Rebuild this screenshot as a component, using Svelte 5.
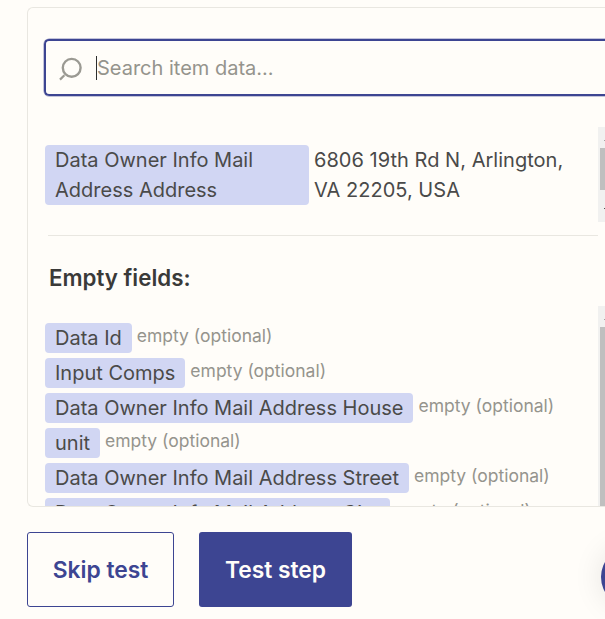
<script>
  const emptyFields = [
    "Data Id",
    "Input Comps",
    "Data Owner Info Mail Address House",
    "unit",
    "Data Owner Info Mail Address Street",
    "Data Owner Info Mail Address City"
  ];
</script>

<div class="page">
  <div class="card">
    <div class="search">
      <svg class="icon" width="26" height="26" viewBox="0 0 26 26" fill="none">
        <circle cx="13.7" cy="12.8" r="8.9" stroke="#9b9a93" stroke-width="2.4" />
        <path d="M6.4 20.2 L2 24.6" stroke="#9b9a93" stroke-width="2.2" />
      </svg>
      <span class="caret"></span>
      <span class="placeholder">Search item data...</span>
    </div>

    <div class="section first">
      <div class="row">
        <span class="pill wide">Data Owner Info Mail Address Address</span>
        <span class="value">6806 19th Rd N, Arlington, VA 22205, USA</span>
      </div>
      <div class="scrollbar short">
        <div class="arrow up"></div>
        <div class="thumb"></div>
        <div class="arrow down"></div>
      </div>
    </div>

    <div class="divider"></div>
    <div class="heading">Empty fields:</div>

    <div class="section list">
      <div class="rows">
        {#each emptyFields as name}
          <div class="row-empty">
            <span class="pill">{name}</span>
            <span class="muted">empty (optional)</span>
          </div>
        {/each}
      </div>
      <div class="scrollbar tall">
        <div class="arrow up"></div>
        <div class="thumb"></div>
      </div>
    </div>
  </div>

  <div class="actions">
    <button class="skip">Skip test</button>
    <button class="test">Test step</button>
  </div>

  <div class="chat"></div>
</div>

<style>
  :global(body) {
    margin: 0;
    background: #fffdf9;
    overflow: hidden;
  }

  .page {
    position: relative;
    width: 605px;
    height: 619px;
    padding: 7px 0 0 27px;
    box-sizing: border-box;
    overflow: hidden;
    font-family: Inter, "Liberation Sans", sans-serif;
    color: #4a4a49;
  }

  .card {
    width: 600px;
    height: 500px;
    box-sizing: border-box;
    border: 1px solid #e9e7e1;
    border-right: none;
    border-radius: 6px 0 0 6px;
    padding-top: 31px;
    overflow: hidden;
  }

  .search {
    display: flex;
    align-items: center;
    height: 57px;
    margin-left: 16px;
    box-sizing: border-box;
    border: 2px solid #3d4592;
    border-right: none;
    border-radius: 5px 0 0 5px;
    box-shadow: 0 0 0 0.5px rgba(61, 69, 146, 0.6);
    padding-left: 12px;
  }

  .icon {
    flex: none;
  }

  .caret {
    width: 1px;
    height: 24px;
    margin-left: 12px;
    background: #2d2e2e;
  }

  .placeholder {
    font-size: 20px;
    color: #95948d;
  }

  .section {
    display: flex;
    justify-content: space-between;
    width: 577px;
  }

  .first {
    height: 95px;
    margin-top: 31px;
  }

  .row {
    display: flex;
    align-items: flex-start;
    margin: 18px 0 0 17px;
  }

  .pill {
    display: inline-block;
    box-sizing: border-box;
    padding: 0 10px;
    background: #d1d6f3;
    border-radius: 4px;
    font-size: 20px;
    line-height: 30px;
    color: #4a4a49;
  }

  .pill.wide {
    width: 264px;
  }

  .value {
    width: 270px;
    margin-left: 5px;
    font-size: 20px;
    line-height: 30px;
    letter-spacing: 0.03px;
    color: #4a4a49;
  }

  .scrollbar {
    flex: none;
    box-sizing: border-box;
    width: 7px;
    padding-left: 2px;
    background: #f1f1f0;
  }

  .short {
    height: 95px;
  }

  .tall {
    height: 201px;
  }

  .thumb {
    background: #bfbfbf;
    margin-top: 7px;
  }

  .short .thumb {
    height: 42px;
  }

  .tall .thumb {
    height: 180px;
  }

  .arrow {
    width: 1px;
    height: 1px;
    margin-left: 4px;
  }

  .arrow.up {
    margin-top: 13px;
    background: #a3a3a3;
  }

  .arrow.down {
    margin-top: 18px;
    background: #505050;
  }

  .divider {
    height: 1px;
    margin: 13px 0 0 20px;
    width: 550px;
    background: #e9e7e1;
  }

  .heading {
    margin: 29px 0 0 21px;
    font-size: 22.3px;
    font-weight: 600;
    line-height: 26px;
    color: #3a3a39;
  }

  .list {
    margin-top: 15px;
  }

  .rows {
    display: flex;
    flex-direction: column;
    gap: 5px;
    margin: 17px 0 0 17px;
    height: 184px;
    overflow: hidden;
  }

  .row-empty {
    display: flex;
    align-items: flex-start;
    height: 30px;
    flex: none;
    white-space: nowrap;
  }

  .muted {
    margin-left: 5px;
    font-size: 17.5px;
    line-height: 25px;
    color: #95948d;
  }

  .actions {
    display: flex;
    gap: 25px;
    margin-top: 25px;
  }

  button {
    height: 75px;
    border-radius: 3px;
    font-family: inherit;
    font-size: 22.8px;
    font-weight: 600;
  }

  .skip {
    width: 147px;
    background: #fffdf9;
    border: 1px solid #3d4592;
    color: #3d4592;
  }

  .test {
    width: 153px;
    background: #3d4592;
    border: none;
    color: #fffdf9;
  }

  .chat {
    position: absolute;
    left: 601px;
    top: 547px;
    width: 60px;
    height: 60px;
    border-radius: 50%;
    background: #3d4592;
    box-shadow: 0 0 30px rgba(0, 0, 0, 0.1);
  }
</style>
